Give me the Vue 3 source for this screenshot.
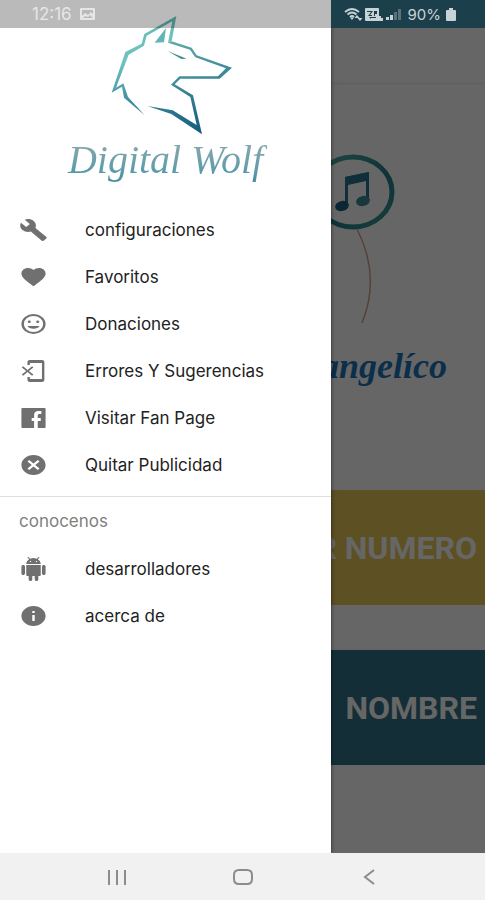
<template>
  <div class="phone">
    <div class="stage">
      <main class="home">
        <header class="toolbar"></header>
        <svg class="balloon" viewBox="0 0 84 172" aria-hidden="true">
          <defs>
            <linearGradient id="ring" x1="0" y1="0" x2="1" y2="1">
              <stop offset="0" stop-color="#4fb3a4" />
              <stop offset="0.6" stop-color="#267f8f" />
              <stop offset="1" stop-color="#3b9c94" />
            </linearGradient>
          </defs>
          <path d="M45 75 Q69 122 50 169" fill="none" stroke="#dba092" stroke-width="1.5" />
          <ellipse cx="41" cy="38" rx="39" ry="35" fill="none" stroke="url(#ring)" stroke-width="5" />
          <path d="M33 23 L57 18 V48 H54 V27 L36 31 V53 H33 Z" fill="#26788d" />
          <path d="M33 23 L57 18 V26 L33 31 Z" fill="#26788d" />
          <ellipse cx="30" cy="52" rx="7" ry="5" fill="#1c6385" transform="rotate(-15 30 52)" />
          <ellipse cx="51" cy="47" rx="7" ry="5" fill="#3f8c99" transform="rotate(-15 51 47)" />
        </svg>
        <h1 class="title">Evangelíco</h1>
        <button type="button" class="banner banner-number">POR NUMERO</button>
        <button type="button" class="banner banner-name">NOMBRE</button>
      </main>
      <div class="scrim"></div>

      <aside class="drawer">
        <div class="brand">
          <svg class="wolf" viewBox="0 0 456 390" aria-hidden="true">
            <defs>
              <linearGradient id="fur" gradientUnits="userSpaceOnUse" x1="150" y1="20" x2="260" y2="370">
                <stop offset="0" stop-color="#63b5af" />
                <stop offset="0.3" stop-color="#70c5c0" />
                <stop offset="0.55" stop-color="#4a99a8" />
                <stop offset="1" stop-color="#135b80" />
              </linearGradient>
              <linearGradient id="snout" gradientUnits="userSpaceOnUse" x1="240" y1="90" x2="330" y2="370">
                <stop offset="0" stop-color="#64aaaa" />
                <stop offset="0.4" stop-color="#438f9c" />
                <stop offset="1" stop-color="#135b80" />
              </linearGradient>
            </defs>
            <path d="M259 18 L163 72 L155 101 L106 126 L65 248 L96 230 L102 263 L164 316 L114 261 L100 220 L78 233 L116 134 L162 107 L170 77 L247 34 L234 98 L245 94 Z" fill="url(#fur)" />
            <path d="M234 98 L300 119 L316 142 L408 175 L384 199 L268 199 L243 224 L301 261 L320 345 L248 301 L172 288 L244 312 L336 373 L309 256 L254 223 L271 206 L389 206 L426 173 L320 136 L305 113 L245 94 Z" fill="url(#snout)" />
            <path d="M228 54 L194 98 L222 97 Z" fill="#63b5b3" />
            <path d="M233 123 L290 146 L274 147 Z" fill="#438f96" />
          </svg>
          <div class="brand-name">Digital Wolf</div>
        </div>

        <nav class="menu">
          <a v-for="item in mainItems" :key="item.label" href="#" class="item">
            <svg class="icon" viewBox="0 0 24 24" preserveAspectRatio="none" aria-hidden="true">
              <path :d="item.icon" fill-rule="evenodd" />
            </svg>
            <span>{{ item.label }}</span>
          </a>
        </nav>
        <nav class="menu menu-about">
          <h2 class="subheader">conocenos</h2>
          <a v-for="item in aboutItems" :key="item.label" href="#" class="item">
            <svg class="icon" viewBox="0 0 24 24" preserveAspectRatio="none" aria-hidden="true">
              <path :d="item.icon" fill-rule="evenodd" />
            </svg>
            <span>{{ item.label }}</span>
          </a>
        </nav>
      </aside>

      <div class="status">
        <div class="status-group">
          <span>12:16</span>
          <svg width="15" height="12" viewBox="0 0 15 12" aria-hidden="true">
            <path fill="currentColor" fill-rule="evenodd" d="M1 0H14Q15 0 15 1V11Q15 12 14 12H1Q0 12 0 11V1Q0 0 1 0ZM2 2V8L5 5L8 7L11 4L13 6V2ZM3 10H13L10 7L8 9L5 8Z" />
          </svg>
        </div>
        <div class="status-group status-right">
          <svg width="19" height="13" viewBox="0 0 19 13" aria-hidden="true">
            <path d="M1 4Q8 -2 15 4M3.500 6.500Q8 2.500 12.500 6.500M6 9Q8 7 10 9" fill="none" stroke="currentColor" stroke-width="1.800" />
            <path d="M8 12L6 9.500H10ZM13 7L15.500 10H10.500ZM16 13L13.500 10H18.500Z" fill="currentColor" />
          </svg>
          <svg width="19" height="13" viewBox="0 0 19 13" aria-hidden="true">
            <path fill="currentColor" fill-rule="evenodd" d="M1 0H13Q14 0 14 1V8H16V10H18V13H1Q0 13 0 12V1Q0 0 1 0ZM2 3V4H6L3 8H7V7H5L8 3ZM9 3V8H10V6H12V3ZM4 9L6 11V10H11V9Z" />
          </svg>
          <svg width="15" height="12" viewBox="0 0 15 12" aria-hidden="true">
            <path d="M0 12V9H3V12ZM4 12V7H7V12Z" fill="currentColor" />
            <path d="M8 12V4H11V12ZM12 12V1H15V12Z" fill="currentColor" opacity="0.35" />
          </svg>
          <span class="percent">90%</span>
          <svg width="10" height="13" viewBox="0 0 10 13" aria-hidden="true">
            <path d="M3 0H7V2H9Q10 2 10 3V12Q10 13 9 13H1Q0 13 0 12V3Q0 2 1 2H3Z" fill="currentColor" />
          </svg>
        </div>
      </div>
    </div>

    <footer class="navbar">
      <button v-for="btn in navButtons" :key="btn.label" type="button" :aria-label="btn.label">
        <svg width="22" height="18" viewBox="0 0 22 18" aria-hidden="true">
          <path :d="btn.icon" fill="none" stroke="#8c8c8c" stroke-width="2" />
        </svg>
      </button>
    </footer>
  </div>
</template>

<script setup>
import { ref } from "vue";

const mainItems = ref([
  {
    label: "configuraciones",
    icon: "M22.700 19l-9.100-9.100c.9-2.300.4-5-1.500-6.900-2-2-5-2.400-7.400-1.300L9 6 6 9 1.600 4.700C.4 7.100.9 10.100 2.900 12.100c1.900 1.900 4.600 2.400 6.900 1.500l9.100 9.100c.4.4 1 .4 1.400 0l2.300-2.300c.5-.4.5-1.100.1-1.400z",
  },
  {
    label: "Favoritos",
    icon: "M12 21.350l-1.450-1.320C5.400 15.360 2 12.280 2 8.500 2 5.420 4.420 3 7.500 3c1.740 0 3.410.81 4.500 2.090C13.090 3.810 14.760 3 16.500 3 19.580 3 22 5.420 22 8.500c0 3.780-3.400 6.860-8.550 11.540L12 21.350z",
  },
  {
    label: "Donaciones",
    icon: "M12 2a10 10 0 1 0 0 20a10 10 0 1 0 0-20zM12 4a8 8 0 1 1 0 16a8 8 0 1 1 0-16zM8.500 8.500a1.300 1.300 0 1 0 0 2.600a1.300 1.300 0 1 0 0-2.600zM15.500 8.500a1.300 1.300 0 1 0 0 2.600a1.300 1.300 0 1 0 0-2.600zM7 14h10c-.8 1.800-2.700 2.800-5 2.800S7.800 15.800 7 14z",
  },
  {
    label: "Errores Y Sugerencias",
    icon: "M7 5V3c0-1.100.9-2 2-2h10c1.100 0 2 .9 2 2v18c0 1.100-.9 2-2 2H9c-1.100 0-2-.9-2-2v-3h2v2h10V4H9v2H7zM3.400 7.300L2.300 8.400 6 12l-3.700 3.600 1.100 1.100L7.100 13l3.700 3.700 1.100-1.100L8.200 12l3.700-3.600-1.100-1.100L7.100 11z",
  },
  {
    label: "Visitar Fan Page",
    icon: "M3 2h18c.6 0 1 .4 1 1v18c0 .6-.4 1-1 1h-5.500v-7h2.500v-3h-2.500v-2.500c0-.9.400-1.500 1.500-1.500H18.500V5h-2.500C13.800 5 12.500 6.500 12.500 9v3h-2v3h2v7H3c-.6 0-1-.4-1-1V3c0-.6.4-1 1-1z",
  },
  {
    label: "Quitar Publicidad",
    icon: "M12 2C6.470 2 2 6.470 2 12s4.470 10 10 10 10-4.470 10-10S17.530 2 12 2zm5 13.590L15.590 17 12 13.410 8.410 17 7 15.590 10.590 12 7 8.410 8.410 7 12 10.590 15.590 7 17 8.410 13.410 12 17 15.590z",
  },
]);

const aboutItems = ref([
  {
    label: "desarrolladores",
    icon: "M6 18c0 .55.45 1 1 1h1v3.500c0 .83.67 1.500 1.500 1.500s1.500-.67 1.500-1.500V19h2v3.500c0 .83.67 1.500 1.500 1.500s1.500-.67 1.500-1.500V19h1c.55 0 1-.45 1-1V8H6v10zM3.500 8C2.670 8 2 8.670 2 9.500v7c0 .83.67 1.500 1.500 1.500S5 17.330 5 16.500v-7C5 8.670 4.330 8 3.500 8zm17 0c-.83 0-1.500.67-1.500 1.500v7c0 .83.67 1.500 1.500 1.500s1.500-.67 1.500-1.500v-7c0-.83-.67-1.500-1.500-1.500zm-4.970-5.840l1.300-1.300c.2-.2.2-.51 0-.71-.2-.2-.51-.2-.71 0l-1.480 1.480C13.850 1.230 12.950 1 12 1c-.96 0-1.860.23-2.660.63L7.850.15c-.2-.2-.51-.2-.71 0-.2.2-.2.51 0 .71l1.310 1.310C6.970 3.260 6 5.010 6 7h12c0-1.990-.97-3.750-2.470-4.840zM10 5H9V4h1v1zm5 0h-1V4h1v1z",
  },
  {
    label: "acerca de",
    icon: "M12 2C6.480 2 2 6.480 2 12s4.480 10 10 10 10-4.480 10-10S17.520 2 12 2zm1 15h-2v-6h2v6zm0-8h-2V7h2v2z",
  },
]);

const navButtons = ref([
  { label: "Recientes", icon: "M3 2V17M11 2V17M19 2V17" },
  { label: "Inicio", icon: "M7 2H15Q20 2 20 7V11Q20 16 15 16H7Q2 16 2 11V7Q2 2 7 2Z" },
  { label: "Volver", icon: "M17 2L8 9L17 16" },
]);
</script>

<style>
body {
  margin: 0;
}
</style>

<style scoped>
.phone {
  display: flex;
  flex-direction: column;
  min-height: 100vh;
  font-family: Inter, Roboto, sans-serif;
  background: #fff;
}

.stage {
  position: relative;
  flex: 1;
  display: flex;
  overflow: hidden;
}

.home {
  flex: 1;
  display: flex;
  flex-direction: column;
  min-width: 0;
}

.toolbar {
  height: 82px;
  margin-bottom: 69px;
  border-bottom: 3px solid #f4f4f4;
}

.balloon {
  align-self: flex-end;
  width: 84px;
  height: 172px;
  margin-right: 89px;
}

.title {
  margin: 0 38px 0 0;
  height: 164px;
  font-family: "Monotype Corsiva", "Liberation Serif", serif;
  font-size: 36px;
  font-style: italic;
  font-weight: 700;
  line-height: 80px;
  text-align: right;
  color: #1c76bc;
}

.banner {
  height: 115px;
  margin-bottom: 45px;
  padding: 0 8px;
  border: 0;
  font-family: Roboto, sans-serif;
  font-size: 32px;
  font-weight: 700;
  text-align: right;
  color: #fff;
}

.banner-number {
  background: #e8c858;
}

.banner-name {
  background: #327389;
}

.scrim {
  position: absolute;
  inset: 0;
  background: rgba(0, 0, 0, 0.6);
}

.drawer {
  position: absolute;
  top: 0;
  bottom: 0;
  left: 0;
  width: calc(100% - 154px);
  background: #fff;
  box-shadow: 0 0 4px rgba(0, 0, 0, 0.6);
}

.brand {
  display: flex;
  flex-direction: column;
  align-items: center;
  padding: 10px 0 18px;
}

.wolf {
  width: 152px;
  height: 130px;
}

.brand-name {
  font-family: "Monotype Corsiva", "Liberation Serif", serif;
  font-size: 40px;
  font-style: italic;
  line-height: 40px;
  padding: 0 4px 8px;
  color: transparent;
  background: linear-gradient(#8fa9ad, #5f9dab 60%, #37879c);
  background-clip: text;
}

.menu {
  padding-bottom: 8px;
}

.menu-about {
  border-top: 1px solid #dedede;
}

.item {
  display: flex;
  align-items: center;
  gap: 37px;
  height: 47px;
  padding-left: 19px;
  font-size: 17px;
  color: #222;
  text-decoration: none;
}

.icon {
  width: 29px;
  height: 24px;
  fill: #707070;
}

.subheader {
  margin: 0;
  padding-left: 19px;
  font-size: 17px;
  font-weight: 400;
  line-height: 48px;
  color: #808080;
}

.status {
  position: absolute;
  top: 0;
  left: 0;
  right: 0;
  display: flex;
  justify-content: space-between;
  height: 28px;
  font-size: 17px;
  color: #e6e6e6;
  background: linear-gradient(#1c3f4c, #1c3f4c) right / 154px 100% no-repeat, rgba(0, 0, 0, 0.27);
}

.status-group {
  display: flex;
  align-items: center;
  gap: 8px;
  padding-left: 32px;
}

.status-right {
  gap: 2px;
  padding: 0 29px 0 0;
  font-size: 15px;
  color: #c9d3d7;
}

.percent {
  padding: 0 3px 0 5px;
}

.navbar {
  display: flex;
  height: 47px;
  padding: 0 54px;
  background: #f1f1f1;
}

.navbar button {
  flex: 1;
  display: flex;
  align-items: center;
  justify-content: center;
  padding: 0;
  border: 0;
  background: none;
}
</style>
